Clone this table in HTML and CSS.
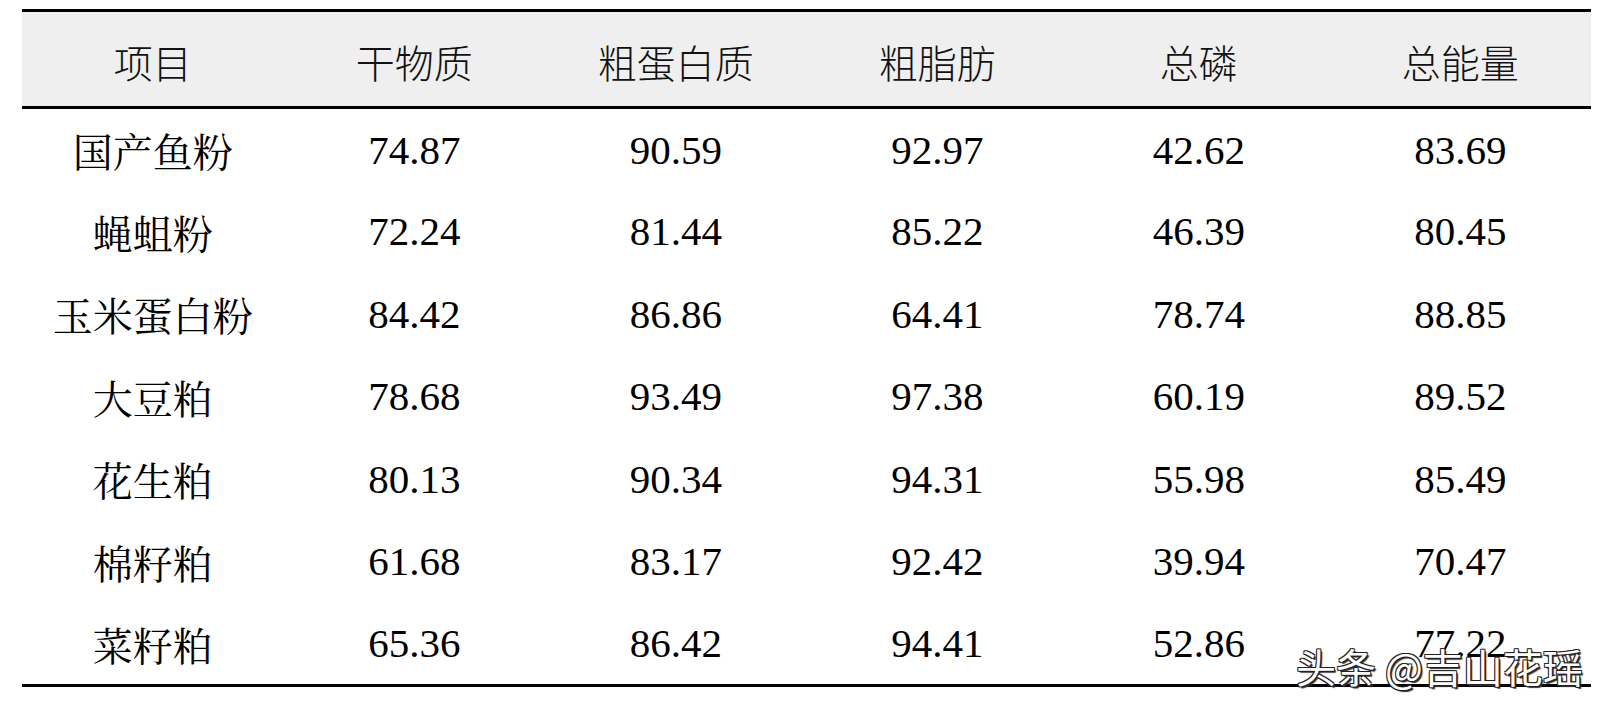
FILE: index.html
```html
<!DOCTYPE html>
<html lang="zh">
<head>
<meta charset="utf-8">
<title>消化率</title>
<link rel="stylesheet" href="styles.css">
</head>
<body>
<div class="page">
  <table class="data">
    <thead>
      <tr>
        <th>项目</th><th>干物质</th><th>粗蛋白质</th><th>粗脂肪</th><th>总磷</th><th>总能量</th>
      </tr>
    </thead>
    <tbody>
      <tr><td class="name">国产鱼粉</td><td>74.87</td><td>90.59</td><td>92.97</td><td>42.62</td><td>83.69</td></tr>
      <tr><td class="name">蝇蛆粉</td><td>72.24</td><td>81.44</td><td>85.22</td><td>46.39</td><td>80.45</td></tr>
      <tr><td class="name">玉米蛋白粉</td><td>84.42</td><td>86.86</td><td>64.41</td><td>78.74</td><td>88.85</td></tr>
      <tr><td class="name">大豆粕</td><td>78.68</td><td>93.49</td><td>97.38</td><td>60.19</td><td>89.52</td></tr>
      <tr><td class="name">花生粕</td><td>80.13</td><td>90.34</td><td>94.31</td><td>55.98</td><td>85.49</td></tr>
      <tr><td class="name">棉籽粕</td><td>61.68</td><td>83.17</td><td>92.42</td><td>39.94</td><td>70.47</td></tr>
      <tr><td class="name">菜籽粕</td><td>65.36</td><td>86.42</td><td>94.41</td><td>52.86</td><td>77.22</td></tr>
    </tbody>
  </table>
  <div class="watermark">头条 @吉山花瑶</div>
</div>
</body>
</html>
```

FILE: styles.css
```css
html, body {
  margin: 0;
  padding: 0;
  background: #ffffff;
}

.page {
  position: relative;
  width: 1611px;
  height: 709px;
  padding: 9px 0 0 22px;
  box-sizing: border-box;
}

.data {
  width: 1569px;
  border-collapse: collapse;
  table-layout: fixed;
  color: #000;
}

.data thead tr {
  background: #efefef;
  border-top: 3px solid #000;
  border-bottom: 3px solid #000;
}

.data th {
  height: 91px;
  padding: 3px 0 0 0;
  font-family: "Noto Sans CJK SC", "Noto Sans", sans-serif;
  font-weight: 300;
  font-size: 39px;
  color: #111;
  text-align: center;
  vertical-align: middle;
}

.data tbody tr {
  height: 82.5px;
}

.data tbody tr:last-child {
  border-bottom: 3px solid #000;
}

.data td {
  padding: 0;
  text-align: center;
  vertical-align: middle;
  font-family: "Liberation Serif", "Times New Roman", serif;
  font-size: 41px;
}

.data td.name {
  font-family: "Noto Serif CJK SC", "Noto Sans CJK SC", serif;
  font-size: 40px;
}

.watermark {
  position: absolute;
  left: 1296px;
  top: 641px;
  font-family: "Noto Sans CJK SC", "Noto Sans", sans-serif;
  font-size: 40px;
  line-height: 50px;
  color: #ffffff;
  white-space: nowrap;
  letter-spacing: 0;
  text-shadow: 1px 1px 0 #222, -1px -1px 0 #222, 1px -1px 0 #222, -1px 1px 0 #222, 2px 2px 1px #333;
}
```
